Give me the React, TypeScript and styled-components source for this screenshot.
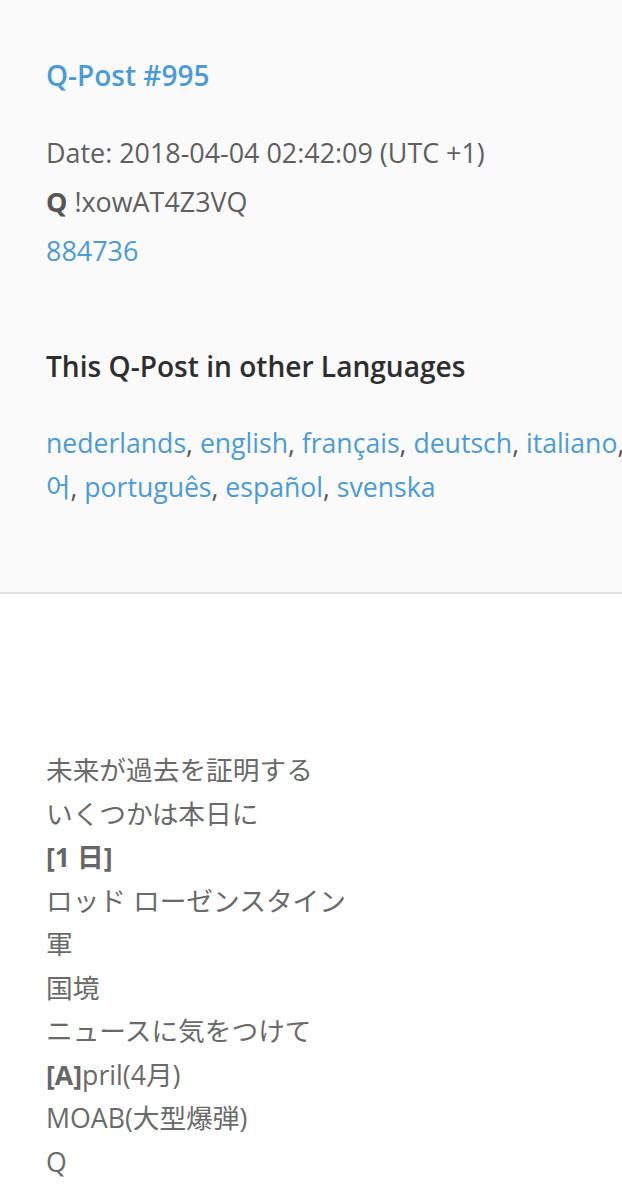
import React from "react";
import styled, { createGlobalStyle } from "styled-components";

const Global = createGlobalStyle`
  html, body { margin: 0; padding: 0; background: #ffffff; }
  body {
    font-family: "Open Sans", "Noto Sans CJK JP", sans-serif;
    -webkit-font-smoothing: antialiased;
    overflow-x: hidden;
  }
`;

const Page = styled.div`
  width: 622px;
  overflow: hidden;
  background: #ffffff;
`;

const Header = styled.section`
  background: #fafafa;
  border-bottom: 2px solid #dedede;
  padding: 56px 0 83px 46px;
`;

const Title = styled.h1`
  margin: 0;
  font-size: 28px;
  line-height: 38px;
  font-weight: 600;
  color: #4a9bdb;
`;

const Meta = styled.div`
  margin-top: 34px;
  font-size: 26.9px;
  line-height: 49px;
  color: #5f5f5f;
`;

const MetaLine = styled.div`
  white-space: nowrap;
`;

const Strong = styled.strong`
  font-weight: 700;
  color: #555;
`;

const Link = styled.a`
  color: #4a9bdb;
  text-decoration: none;
`;

const SectionHeading = styled.h2`
  margin: 71px 0 0;
  font-size: 28.1px;
  line-height: 40px;
  font-weight: 600;
  color: #2e2e2e;
  white-space: nowrap;
`;

const Languages = styled.div`
  margin-top: 35px;
  font-size: 26.6px;
  line-height: 44px;
  color: #555;
  white-space: nowrap;
`;

const Body = styled.article`
  padding: 154px 0 40px 46px;
  font-family: "Open Sans", "Noto Sans CJK JP", sans-serif;
  font-size: 26.7px;
  line-height: 43.5px;
  color: #6a6a6a;
`;

const BodyLine = styled.div`
  white-space: nowrap;
`;

const Bold = styled.b`
  font-weight: 700;
  color: #666;
`;

const langs = [
  "nederlands",
  "english",
  "français",
  "deutsch",
  "italiano",
  "日本語",
];

export default function App() {
  return (
    <>
      <Global />
      <Page>
        <Header>
          <Title>
            <Link href="#">Q-Post #995</Link>
          </Title>
          <Meta>
            <MetaLine>Date: 2018-04-04 02:42:09 (UTC +1)</MetaLine>
            <MetaLine>
              <Strong>Q</Strong> !xowAT4Z3VQ
            </MetaLine>
            <MetaLine>
              <Link href="#">884736</Link>
            </MetaLine>
          </Meta>
          <SectionHeading>This Q-Post in other Languages</SectionHeading>
          <Languages>
            {langs.map((l) => (
              <React.Fragment key={l}>
                <Link href="#">{l}</Link>,{" "}
              </React.Fragment>
            ))}
            <Link href="#">
              한국
              <br />어
            </Link>
            , <Link href="#">português</Link>, <Link href="#">español</Link>,{" "}
            <Link href="#">svenska</Link>
          </Languages>
        </Header>
        <Body>
          <BodyLine>未来が過去を証明する</BodyLine>
          <BodyLine>いくつかは本日に</BodyLine>
          <BodyLine>
            <Bold>[1 日]</Bold>
          </BodyLine>
          <BodyLine>ロッド ローゼンスタイン</BodyLine>
          <BodyLine>軍</BodyLine>
          <BodyLine>国境</BodyLine>
          <BodyLine>ニュースに気をつけて</BodyLine>
          <BodyLine>
            <Bold>[A]</Bold>pril(4月)
          </BodyLine>
          <BodyLine>MOAB(大型爆弾)</BodyLine>
          <BodyLine>Q</BodyLine>
        </Body>
      </Page>
    </>
  );
}
